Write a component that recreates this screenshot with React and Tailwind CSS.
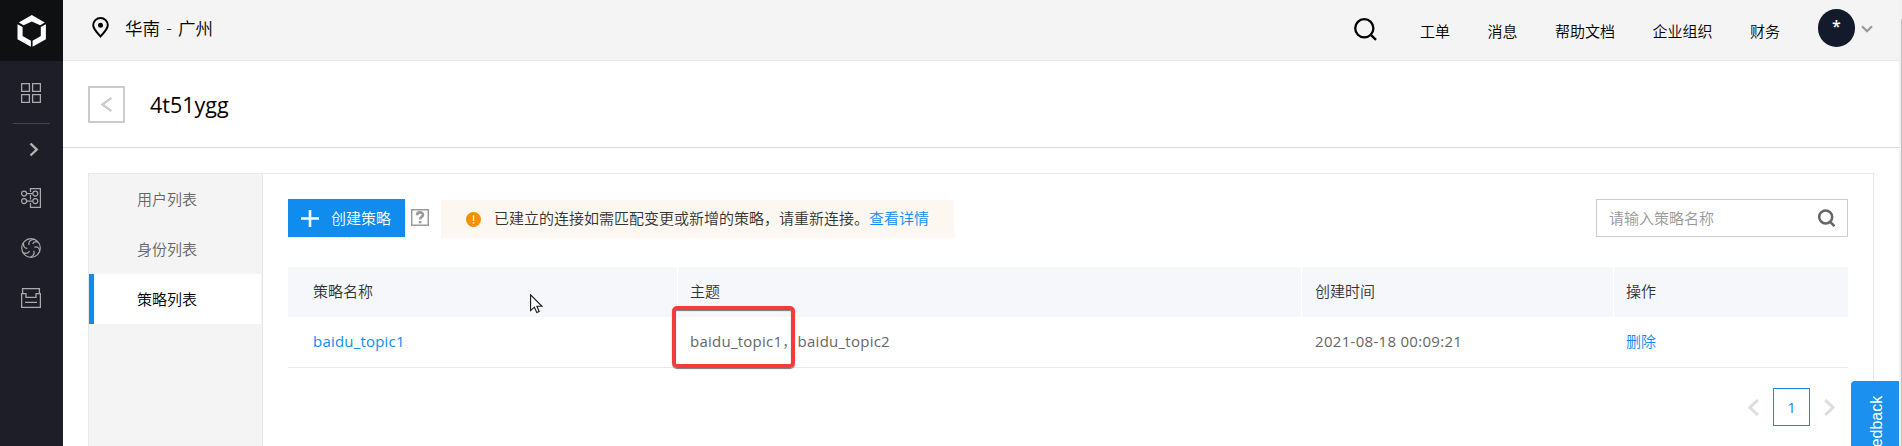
const navItems = ['工单', '消息', '帮助文档', '企业组织', '财务'];

function Logo() {
  return (
    <svg className="h-8 w-[30px]" viewBox="0 0 30 32" fill="#fff">
      <path d="M14.8 0 L27.8 7.4 L23.2 10.2 L14.8 6.4 L6.6 10.2 L1.8 7.4 Z" />
      <path d="M0.5 9.2 L5.6 12 V21 L13.9 25.8 V31.8 L0.5 24.2 Z" />
      <path d="M28.9 9.2 L23.8 12 V21 L15.6 25.8 V31.8 L28.9 24.2 Z" />
    </svg>
  );
}

function Sidebar() {
  return (
    <aside className="flex w-[63px] shrink-0 flex-col items-center bg-[#1e1e28]">
      <div className="flex h-[61px] w-full items-center justify-center bg-[#0f1012]">
        <Logo />
      </div>
      <svg className="mt-[22px] mr-px size-5" viewBox="0 0 20 20" fill="none" stroke="#aaabad" strokeWidth="1.3">
        <path d="M.6 .6H8.4V8.4H.6ZM11.6 .6H19.4V8.4H11.6ZM.6 11.6H8.4V19.4H.6ZM11.6 11.6H19.4V19.4H11.6Z" />
      </svg>
      <div className="mt-5 h-px w-[37px] bg-[#42424e]" />
      <svg className="mt-[18px] ml-1 h-[15px] w-[10px]" viewBox="0 0 10 15" fill="none" stroke="#b4b4b8" strokeWidth="2.4">
        <path d="M1.5 1.5 7.7 7.5 1.5 13.5" />
      </svg>
      <svg className="mt-[31px] mr-px size-5" viewBox="0 0 20 20" fill="none" stroke="#aaabad" strokeWidth="1.2">
        <path d="M9.5 4V.6H19.4V19.4H9.5V15M9.5 7V11.5M6 5.6H11.5M6 13.1H11.5" />
        <circle cx="3.1" cy="5.6" r="2.5" />
        <circle cx="14.3" cy="5.6" r="2.5" />
        <circle cx="3.1" cy="13.1" r="2.5" />
        <circle cx="14.3" cy="13.1" r="2.5" />
      </svg>
      <svg className="mt-[30px] mr-px size-5" viewBox="0 0 20 20" fill="none" stroke="#aaabad" strokeWidth="1.2">
        <circle cx="10" cy="10" r="9.3" />
        <path d="M13.2 1.4C9 1.8 7.3 3.6 8 7M2.5 4.8C2.3 8.6 3.5 10.4 6.3 10.3M1.9 14.6C5.4 16 7.3 15.4 8.5 13M9.6 19.2C12.8 17.5 13.8 15.2 12.6 12.8M18.7 13.2C18.5 10 16.5 8.2 13.2 9.2M16.9 4.2C14.8 3.3 12.6 4 11.7 6" />
      </svg>
      <svg className="mt-[30px] mr-px size-5" viewBox="0 0 20 20" fill="none" stroke="#aaabad" strokeWidth="1.3">
        <path d="M1.6 5.5V.6H18.4V5.5M.6 5.6H5V9.4H15V5.6H19.4V19.4H.6ZM4 14.4H16" />
      </svg>
    </aside>
  );
}

function Header() {
  return (
    <header className="flex h-[61px] shrink-0 items-center border-b border-[#e7e7ea] bg-[#f4f4f4] pl-[29px] text-black">
      <svg className="mt-[-5px] h-[21px] w-[17px]" viewBox="0 0 17 21" fill="none" stroke="#000" strokeWidth="2">
        <path d="M8.5 19.4C5 15.5 1.2 11.8 1.2 8.2A7.3 7.2 0 0 1 15.8 8.2C15.8 11.8 12 15.5 8.5 19.4Z" />
        <circle cx="8.5" cy="8.2" r="2.5" fill="#000" stroke="none" />
      </svg>
      <span className="-mt-1 ml-4 text-[17.5px] [word-spacing:1.7px]">华南 - 广州</span>
      <svg className="-mt-0.5 ml-auto size-[23px]" viewBox="0 0 23 23" fill="none" stroke="#000" strokeWidth="2.3">
        <circle cx="10.3" cy="10.3" r="9.1" />
        <path d="M16.6 16.6 22 21.8" />
      </svg>
      <nav className="mt-px ml-[43px] flex gap-[37.5px]">
        {navItems.map((item) => (
          <span key={item}>{item}</span>
        ))}
      </nav>
      <div className="-mt-1 ml-[38px] flex h-[38px] w-[37px] justify-center rounded-full bg-[#121a2b] pt-[7px] text-base leading-5 font-semibold text-white">
        *
      </div>
      <svg className="-mt-0.5 mr-[26px] ml-1.5 h-2 w-3" viewBox="0 0 12 8" fill="none" stroke="#999" strokeWidth="2.2">
        <path d="M1 1.2 6 6.3 11 1.2" />
      </svg>
    </header>
  );
}

function SideMenu() {
  return (
    <ul className="w-[174px] shrink-0 border-r border-[#e6e6e6] bg-[#f4f4f4] text-[#666]">
      <li className="flex h-[50px] items-center pl-12">用户列表</li>
      <li className="flex h-[50px] items-center pl-12">身份列表</li>
      <li className="mr-px flex h-[50px] items-center border-l-5 border-[#108cee] bg-white pl-[43px] text-black">策略列表</li>
    </ul>
  );
}

function Toolbar() {
  return (
    <div className="flex h-[39px] items-start">
      <button className="flex h-[38px] w-[117px] items-center bg-[#108cee] pl-[13px] text-white">
        <svg className="mr-3 h-[17px] w-[18px]" viewBox="0 0 18 17" stroke="#fff" strokeWidth="2.6">
          <path d="M0 8.5H18M9 0V17" />
        </svg>
        创建策略
      </button>
      <svg className="mt-2.5 ml-1.5 h-[17px] w-[18px]" viewBox="0 0 18 17" fill="none" stroke="#999">
        <path d="M.7 .7H17.3V16.3H.7Z" strokeWidth="1.5" />
        <path d="M6.1 6.2C6.1 2.5 12 2.6 12 5.8C12 8 9.1 7.8 9.1 10.4M9.1 12V14.2" strokeWidth="2.6" />
      </svg>
      <div className="mt-px ml-3 flex h-[38px] w-[513px] items-center bg-[#fcf7f1] pl-[25px] text-[#333]">
        <svg className="mr-[13px] size-[15px] shrink-0" viewBox="0 0 15 15">
          <circle cx="7.5" cy="7.5" r="7.5" fill="#f39000" />
          <path d="M7.5 3.2V9M7.5 10.2V11.8" stroke="#fff" strokeWidth="1.3" />
        </svg>
        <span className="pb-0.5 whitespace-nowrap">
          已建立的连接如需匹配变更或新增的策略，请重新连接。
          <a className="text-[#108cee]">查看详情</a>
        </span>
      </div>
      <div className="ml-auto flex h-[38px] w-[252px] items-center justify-between border border-[#ccc] pr-3 pl-3 text-[#999]">
        <span>请输入策略名称</span>
        <svg className="h-[18px] w-[17px]" viewBox="0 0 17 18" fill="none" stroke="#666" strokeWidth="2.5">
          <circle cx="7.7" cy="7.9" r="6.5" />
          <path d="M12 12.6 16.4 17.2" />
        </svg>
      </div>
    </div>
  );
}

const gridCols = 'grid grid-cols-[389px_623px_311px_234px] gap-x-px';

function PolicyTable() {
  return (
    <div className="relative mt-[29px] w-[1560px]">
      <div className={`${gridCols} h-[50px] text-[#333]`}>
        <div className="flex items-center bg-[#f6f7fb] pb-0.5 pl-[25px]">策略名称</div>
        <div className="flex items-center bg-[#f6f7fb] pb-0.5 pl-3">主题</div>
        <div className="flex items-center bg-[#f6f7fb] pb-0.5 pl-[13px]">创建时间</div>
        <div className="flex items-center bg-[#f6f7fb] pb-0.5 pl-3">操作</div>
      </div>
      <div className={`${gridCols} h-[51px] items-center border-b border-[#e8e8e8] pb-0.5 text-[#666]`}>
        <div className="pl-[25px] font-normal tracking-[0.2px] text-[#108cee]">baidu_topic1</div>
        <div className="pl-3 font-normal tracking-[0.25px]">
          baidu_topic1<span className="font-light">，</span>baidu_topic2
        </div>
        <div className="pl-[13px] font-normal tracking-[0.3px]">2021-08-18 00:09:21</div>
        <div className="pl-3 text-[#108cee]">删除</div>
      </div>
      <div className="absolute top-[39px] left-96 h-[62px] w-[123px] rounded-[5px] border-4 border-[#f23c3c] shadow-[0_1px_1px_#777,inset_0_1px_1px_#777]" />
      <svg className="absolute top-[27px] left-[242px] h-5 w-[13px]" viewBox="0 0 13 20" fill="#fff" stroke="#16161e" strokeWidth="1.1">
        <path d="M.6 .8V16.6L4.4 13.2L6.8 18.6L9.2 17.5L6.9 12.3H12Z" />
      </svg>
    </div>
  );
}

function Pagination() {
  return (
    <div className="mt-5 flex h-[38px] items-center justify-end pr-[13px]">
      <svg className="h-[17px] w-[11px]" viewBox="0 0 11 17" fill="none" stroke="#ddd" strokeWidth="3">
        <path d="M9.8 1 2 8.5 9.8 16" />
      </svg>
      <div className="mx-3.5 flex h-[38px] w-[37px] items-center justify-center border border-[#108cee] pb-px font-normal text-[#108cee]">1</div>
      <svg className="h-[17px] w-[11px]" viewBox="0 0 11 17" fill="none" stroke="#ddd" strokeWidth="3">
        <path d="M1.2 1 9 8.5 1.2 16" />
      </svg>
    </div>
  );
}

export default function App() {
  return (
    <div className="relative flex h-[446px] w-[1902px] overflow-hidden bg-white font-['Open_Sans','Noto_Sans_CJK_SC',sans-serif] text-[15px] leading-5 font-[350]">
      <Sidebar />
      <div className="flex w-[1836px] shrink-0 flex-col">
        <Header />
        <div className="flex h-[87px] shrink-0 items-center border-b border-[#ddd] pl-[25px]">
          <button className="flex size-[37px] items-center justify-center border-2 border-[#ccc]">
            <svg className="h-[15px] w-[11px]" viewBox="0 0 11 15" fill="none" stroke="#ccc" strokeWidth="2.4">
              <path d="M10.5 1 1.5 7.5 10.5 14" />
            </svg>
          </button>
          <h1 className="mt-0.5 ml-[25px] text-[21.5px] font-normal text-black">4t51ygg</h1>
        </div>
        <main className="mt-[25px] mr-[25px] ml-[25px] flex h-[400px] w-[1786px] shrink-0 border border-[#e8e8e8]">
          <SideMenu />
          <section className="w-[1610px] shrink-0 pt-[25px] pr-[25px] pl-[25px]">
            <Toolbar />
            <PolicyTable />
            <Pagination />
          </section>
        </main>
      </div>
      <div className="flex w-[3px] shrink-0 justify-end bg-[#f1f1f1] pt-[19px]">
        <div className="w-px bg-[#c1c1c1]" />
      </div>
      <div className="absolute top-[381px] left-[1851px] flex h-[100px] w-12 justify-center rounded-tl bg-[#1b90ef] pt-[15px] pl-1 font-['Liberation_Sans',sans-serif] text-base leading-none font-normal text-white">
        <span className="h-[70px] rotate-180 text-right [writing-mode:vertical-rl]">Feedback</span>
      </div>
    </div>
  );
}
